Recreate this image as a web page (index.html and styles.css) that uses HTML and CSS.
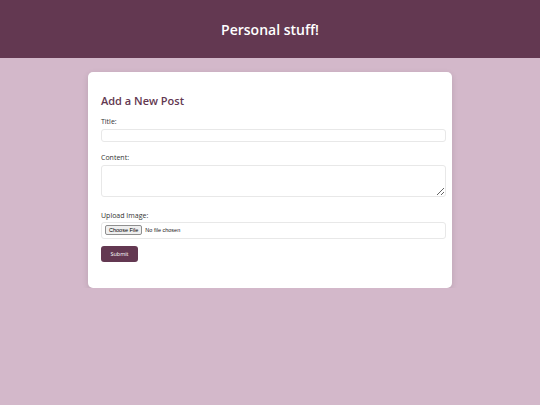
FILE: index.html
```html
<!DOCTYPE html>
<html lang="en">

<head>
    <meta charset="UTF-8">
    <meta name="viewport" content="width=device-width, initial-scale=1.0">
    <title>Personal stuff!</title>
    <link rel="stylesheet" href="styles.css">
</head>

<body>
    <header class="site-header">
        <h1>Personal stuff!</h1>
    </header>

    <div class="card">
        <h2>Add a New Post</h2>
        <form onsubmit="event.preventDefault()">
            <div class="field field-title">
                <label for="title">Title:</label>
                <input type="text" id="title">
            </div>
            <div class="field field-content">
                <label for="content">Content:</label>
                <textarea id="content"></textarea>
            </div>
            <div class="field field-image">
                <label for="image">Upload Image:</label>
                <input type="file" id="image">
            </div>
            <button type="submit">Submit</button>
        </form>
    </div>
</body>

</html>
```

FILE: styles.css
```css
body {
    margin: 0;
    background-color: #d3b8ca;
    font-family: "Open Sans", "Noto Sans", sans-serif;
}

.site-header {
    height: 58px;
    display: flex;
    justify-content: center;
    align-items: center;
    background-color: #633851;
}

.site-header h1 {
    margin: 0;
    color: #fff;
    font-size: 14px;
    font-weight: 600;
}

.card {
    width: 364px;
    box-sizing: border-box;
    margin: 14px auto 0;
    padding: 20px 6px 26px 13px;
    background-color: #fff;
    border-radius: 5px;
    box-shadow: 0 2px 6px rgba(0, 0, 0, 0.12);
}

.card h2 {
    margin: 0 0 7px;
    font-size: 11px;
    line-height: 18px;
    font-weight: 600;
    color: #633851;
}

.field label {
    display: block;
    margin-bottom: 2px;
    font-size: 7px;
    line-height: 10px;
    color: #333;
}

.field-title {
    margin-bottom: 11px;
}

.field-content {
    margin-bottom: 14px;
}

.field-image {
    margin-bottom: 7px;
}

.field-image label {
    margin-bottom: 1px;
}

input[type="text"],
textarea,
input[type="file"] {
    display: block;
    width: 345px;
    box-sizing: border-box;
    margin: 0;
    border: 1px solid #e8e8e8;
    border-radius: 3px;
    font-family: inherit;
}

input[type="text"] {
    height: 13px;
}

textarea {
    height: 32px;
    resize: vertical;
}

input[type="file"] {
    height: 17px;
    padding: 0 3px;
    font-family: "Liberation Sans", Arial, sans-serif;
    font-size: 5.5px;
    line-height: 15px;
    color: #222;
}

input[type="file"]::file-selector-button {
    margin-right: 3px;
    padding: 1px 3px;
    border: 1px solid #8f8f8f;
    border-radius: 2px;
    background-color: #efefef;
    font-size: 5.5px;
    font-family: inherit;
}

button[type="submit"] {
    display: block;
    width: 37px;
    height: 16px;
    padding: 0;
    border: none;
    border-radius: 3px;
    background-color: #633851;
    color: #fff;
    font-family: inherit;
    font-size: 5.5px;
}
```
